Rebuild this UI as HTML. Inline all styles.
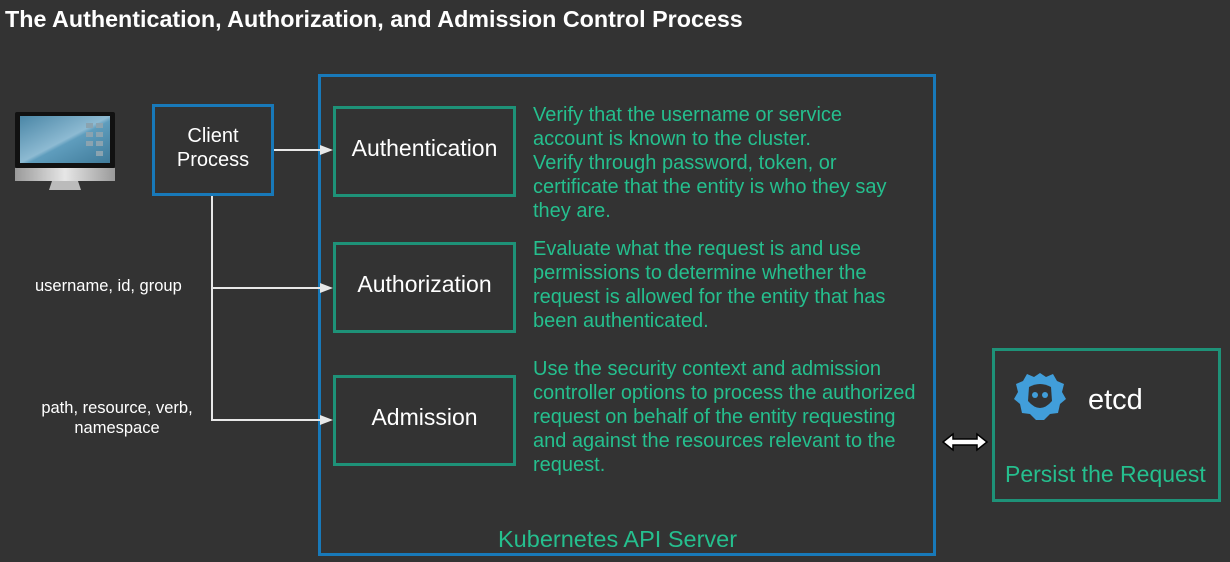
<!DOCTYPE html>
<html><head><style>
body{margin:0;width:1230px;height:562px;background:#333333;position:relative;overflow:hidden;font-family:"Liberation Sans",Arial,sans-serif;}
.a{position:absolute;box-sizing:border-box;}
.blue{border:3px solid #1879b9;}
.grn{border:3px solid #1e9278;}
.t{position:absolute;color:#fff;}
.g{position:absolute;color:#25bf8e;font-size:20px;line-height:24px;}
.c{display:flex;align-items:center;justify-content:center;text-align:center;color:#fff;font-size:23px;padding-bottom:6px;}
</style></head><body>
<div class="t" style="left:5px;top:6px;font-size:23.3px;font-weight:bold;">The Authentication, Authorization, and Admission Control Process</div>

<svg class="a" style="left:14px;top:111px" width="102" height="80" viewBox="0 0 102 80">
<defs><linearGradient id="s" x1="0" y1="0" x2="1" y2="1"><stop offset="0" stop-color="#4a86a6"/><stop offset=".5" stop-color="#8dbad2"/><stop offset=".55" stop-color="#5f9dbd"/><stop offset="1" stop-color="#3f7a99"/></linearGradient>
<linearGradient id="m" x1="0" x2="1"><stop offset="0" stop-color="#9a9a9a"/><stop offset=".5" stop-color="#e6e6e6"/><stop offset="1" stop-color="#9a9a9a"/></linearGradient></defs>
<rect x="1" y="1" width="100" height="56" rx="2" fill="#111"/>
<rect x="6" y="5" width="90" height="47" fill="url(#s)"/>
<g fill="#8aa3b0"><rect x="72" y="12" width="7" height="5"/><rect x="82" y="12" width="7" height="5"/><rect x="72" y="21" width="7" height="5"/><rect x="82" y="21" width="7" height="5"/><rect x="72" y="30" width="7" height="5"/><rect x="82" y="30" width="7" height="5"/><rect x="82" y="40" width="7" height="5"/></g>
<rect x="1" y="57" width="100" height="13" fill="url(#m)"/>
<path d="M38 70 L64 70 L67 79 L35 79 Z" fill="#bbb"/>
</svg>

<div class="a blue c" style="left:152px;top:104px;width:122px;height:92px;font-size:20px;line-height:24px;padding-bottom:4px;">Client<br>Process</div>
<div class="a blue" style="left:318px;top:74px;width:618px;height:482px;"></div>
<div class="g" style="left:498px;top:527px;font-size:23.5px;">Kubernetes API Server</div>

<div class="a grn c" style="left:333px;top:106px;width:183px;height:91px;">Authentication</div>
<div class="a grn c" style="left:333px;top:242px;width:183px;height:91px;">Authorization</div>
<div class="a grn c" style="left:333px;top:375px;width:183px;height:91px;">Admission</div>

<div class="g" style="left:533px;top:103px;">Verify that the username or service<br>account is known to the cluster.<br>Verify through password, token, or<br>certificate that the entity is who they say<br>they are.</div>
<div class="g" style="left:533px;top:237px;">Evaluate what the request is and use<br>permissions to determine whether the<br>request is allowed for the entity that has<br>been authenticated.</div>
<div class="g" style="left:533px;top:357px;">Use the security context and admission<br>controller options to process the authorized<br>request on behalf of the entity requesting<br>and against the resources relevant to the<br>request.</div>

<svg class="a" style="left:0;top:0" width="1230" height="562">
<g stroke="#e8e8e8" stroke-width="2" fill="none">
<path d="M274 150 H322"/><path d="M212 196 V420 H322"/><path d="M212 288 H322"/>
</g>
<g fill="#e8e8e8"><path d="M333 150 L320 145 L320 155Z"/><path d="M333 288 L320 283 L320 293Z"/><path d="M333 420 L320 415 L320 425Z"/></g>
<path d="M943 442 L953 434 V439 H977 V434 L987 442 L977 450 V445 H953 V450 Z" fill="#fff" stroke="#000" stroke-width="1.5"/>
</svg>

<div class="t" style="left:35px;top:277px;font-size:16.5px;">username, id, group</div>
<div class="t" style="left:37px;top:398px;font-size:16.5px;text-align:center;line-height:20px;width:160px;">path, resource, verb,<br>namespace</div>

<div class="a grn" style="left:992px;top:348px;width:229px;height:154px;"></div>
<svg class="a" style="left:1012px;top:371px" width="56" height="50" viewBox="0 0 56 50">
<path fill="#419eda" d="M28 2 L34 6 L41 3 L45 10 L52 13 L50 21 L54 28 L48 33 L46 42 L38 43 L32 49 L24 49 L18 43 L10 42 L8 33 L2 28 L6 21 L4 13 L11 10 L15 3 L22 6 Z"/>
<path fill="#333" d="M17 16 Q28 10 39 16 L40 30 Q28 44 16 30 Z"/>
<circle cx="23" cy="24" r="3" fill="#419eda"/><circle cx="33" cy="24" r="3" fill="#419eda"/>
</svg>
<div class="t" style="left:1088px;top:384px;font-size:29px;">etcd</div>
<div class="g" style="left:1005px;top:462px;font-size:23px;">Persist the Request</div>
</body></html>
